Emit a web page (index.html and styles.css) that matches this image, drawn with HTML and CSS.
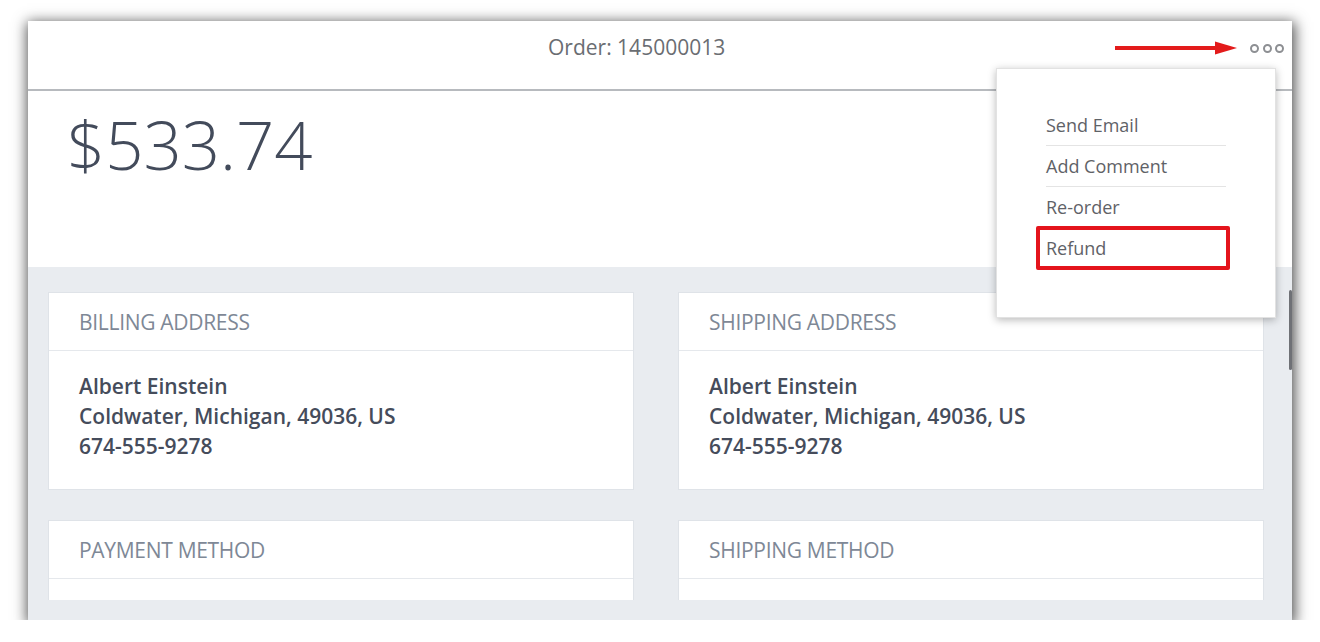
FILE: index.html
```html
<!DOCTYPE html>
<html lang="en">
<head>
<meta charset="utf-8">
<title>Order 145000013</title>
<link rel="stylesheet" href="styles.css">
</head>
<body>
<div class="window">
  <header class="topbar">
    <div class="title">Order: 145000013</div>
    <div class="actions">
      <svg class="arrow" width="122" height="16" viewBox="0 0 122 16">
        <line x1="0" y1="8" x2="104" y2="8" stroke="#e31b1b" stroke-width="4" stroke-linecap="round"/>
        <polygon points="100,1.5 122,8 100,14.5" fill="#e31b1b"/>
      </svg>
      <div class="dots">
        <span class="dot"></span><span class="dot"></span><span class="dot"></span>
      </div>
    </div>
  </header>

  <div class="content">
    <section class="total">
      <div class="amount">$533.74</div>
    </section>
    <section class="cards">
      <div class="card">
        <div class="card-head">BILLING ADDRESS</div>
        <div class="card-body">
          <div>Albert Einstein</div>
          <div>Coldwater, Michigan, 49036, US</div>
          <div>674-555-9278</div>
        </div>
      </div>
      <div class="card">
        <div class="card-head">SHIPPING ADDRESS</div>
        <div class="card-body">
          <div>Albert Einstein</div>
          <div>Coldwater, Michigan, 49036, US</div>
          <div>674-555-9278</div>
        </div>
      </div>
      <div class="card">
        <div class="card-head">PAYMENT METHOD</div>
        <div class="card-body card-body-empty"></div>
      </div>
      <div class="card">
        <div class="card-head">SHIPPING METHOD</div>
        <div class="card-body card-body-empty"></div>
      </div>
    </section>
  </div>

  <div class="scroll-thumb"></div>

  <nav class="menu">
    <ul class="menu-list">
      <li class="menu-item">Send Email</li>
      <li class="menu-item">Add Comment</li>
      <li class="menu-item">Re-order</li>
      <li class="menu-item menu-item-last">Refund<span class="highlight"></span></li>
    </ul>
  </nav>
</div>
</body>
</html>
```

FILE: styles.css
```css
* { box-sizing: border-box; }

html, body {
  margin: 0;
  padding: 0;
  background: #ffffff;
  font-family: "Open Sans", "Noto Sans", sans-serif;
}

.window {
  position: relative;
  width: 1264px;
  height: 599px;
  margin: 21px 0 0 28px;
  background: #e9ecf0;
  box-shadow: 1px 3px 13px 2px rgba(0, 0, 0, 0.68);
  display: flex;
  flex-direction: column;
  padding-bottom: 20px;
}

.topbar {
  height: 70px;
  flex: none;
  background: #ffffff;
  border-bottom: 2px solid #b7babe;
  display: flex;
  align-items: flex-start;
  padding: 12px 8px 0 520px;
}

.title {
  font-size: 21px;
  line-height: 28px;
  color: #6a6d72;
}

.actions {
  margin-left: auto;
  display: flex;
  align-items: center;
  gap: 13px;
  height: 28px;
  margin-top: 1px;
}

.arrow { display: block; }

.dots {
  display: flex;
  gap: 3.5px;
}

.dot {
  width: 9px;
  height: 9px;
  border-radius: 50%;
  border: 2px solid #8d8f93;
}

.content {
  flex: 1;
  overflow: hidden;
}

.total {
  height: 176px;
  background: #ffffff;
  padding: 20px 0 0 39px;
}

.amount {
  font-size: 67px;
  line-height: 1;
  font-weight: 300;
  color: #434b5b;
}

.cards {
  display: grid;
  grid-template-columns: 1fr 1fr;
  column-gap: 44px;
  row-gap: 30px;
  padding: 25px 28px 0 20px;
}

.card {
  background: #ffffff;
  border: 1px solid #dfe3e8;
}

.card-head {
  height: 58px;
  display: flex;
  align-items: center;
  padding: 0 30px;
  border-bottom: 1px solid #e5e8ec;
  font-size: 21px;
  font-weight: 400;
  color: #7e8896;
  letter-spacing: -0.3px;
}

.card-body {
  padding: 20px 30px 28px;
  font-size: 21px;
  line-height: 30px;
  font-weight: 600;
  color: #454c5b;
}

.card-body-empty {
  min-height: 120px;
}

.scroll-thumb {
  position: absolute;
  right: 0;
  top: 269px;
  width: 3px;
  height: 80px;
  background: #6f7176;
  border-radius: 2px;
}

.menu {
  position: absolute;
  left: 968px;
  top: 47px;
  width: 280px;
  height: 250px;
  background: #ffffff;
  border: 1px solid #e2e2e2;
  box-shadow: 0 2px 8px rgba(0, 0, 0, 0.28);
  padding: 36px 49px 0;
}

.menu-list {
  list-style: none;
  margin: 0;
  padding: 0;
}

.menu-item {
  position: relative;
  height: 41px;
  line-height: 40px;
  font-size: 18px;
  color: #5f6267;
  border-bottom: 1px solid #e4e4e4;
}

.menu-item-last { border-bottom: none; }

.highlight {
  position: absolute;
  left: -10px;
  right: -4px;
  top: -2px;
  bottom: -1px;
  border: 4px solid #e4141c;
  border-radius: 2px;
}
```
